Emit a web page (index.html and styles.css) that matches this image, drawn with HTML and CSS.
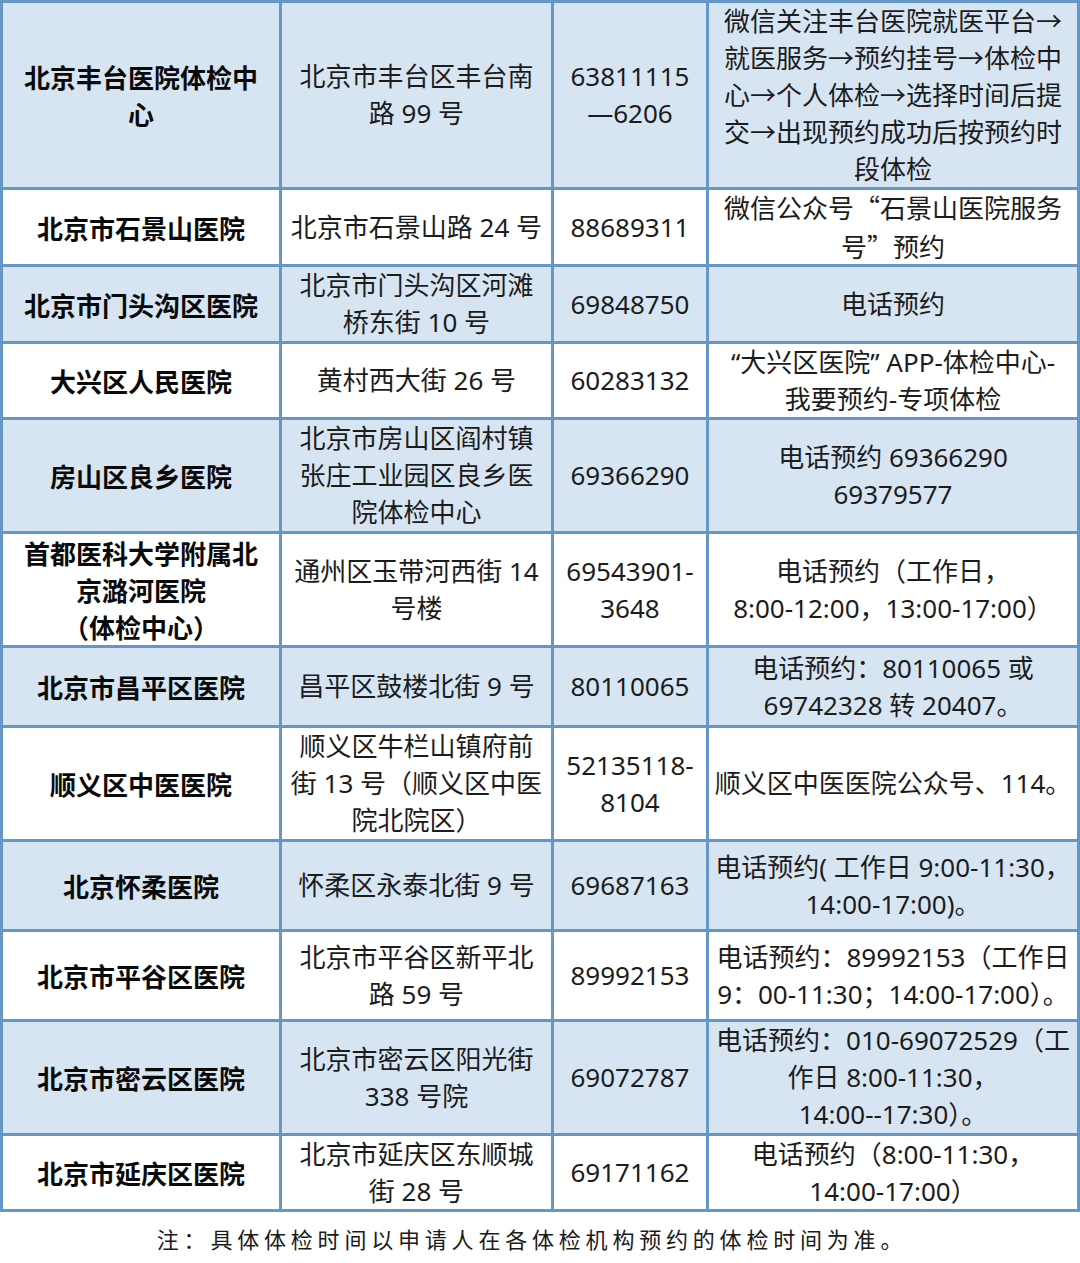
FILE: index.html
```html
<!DOCTYPE html>
<html lang="zh-CN">
<head>
<meta charset="utf-8">
<title>体检机构</title>
<link rel="stylesheet" href="styles.css">
</head>
<body>
<div class="table">
  <div class="row alt">
    <div class="cell name"><div class="t">北京丰台医院体检中<br>心</div></div>
    <div class="cell"><div class="t">北京市丰台区丰台南<br>路 99 号</div></div>
    <div class="cell"><div class="t">63811115<br>—6206</div></div>
    <div class="cell"><div class="t">微信关注丰台医院就医平台→<br>就医服务→预约挂号→体检中<br>心→个人体检→选择时间后提<br>交→出现预约成功后按预约时<br>段体检</div></div>
  </div>
  <div class="row">
    <div class="cell name"><div class="t">北京市石景山医院</div></div>
    <div class="cell"><div class="t">北京市石景山路 24 号</div></div>
    <div class="cell"><div class="t">88689311</div></div>
    <div class="cell"><div class="t">微信公众号<span class="cjk">“</span>石景山医院服务<br>号<span class="cjk">”</span>预约</div></div>
  </div>
  <div class="row alt">
    <div class="cell name"><div class="t">北京市门头沟区医院</div></div>
    <div class="cell"><div class="t">北京市门头沟区河滩<br>桥东街 10 号</div></div>
    <div class="cell"><div class="t">69848750</div></div>
    <div class="cell"><div class="t">电话预约</div></div>
  </div>
  <div class="row">
    <div class="cell name"><div class="t">大兴区人民医院</div></div>
    <div class="cell"><div class="t">黄村西大街 26 号</div></div>
    <div class="cell"><div class="t">60283132</div></div>
    <div class="cell"><div class="t">“大兴区医院” APP-体检中心-<br>我要预约-专项体检</div></div>
  </div>
  <div class="row alt">
    <div class="cell name"><div class="t">房山区良乡医院</div></div>
    <div class="cell"><div class="t">北京市房山区阎村镇<br>张庄工业园区良乡医<br>院体检中心</div></div>
    <div class="cell"><div class="t">69366290</div></div>
    <div class="cell"><div class="t">电话预约 69366290<br>69379577</div></div>
  </div>
  <div class="row">
    <div class="cell name"><div class="t">首都医科大学附属北<br>京潞河医院<br>（体检中心）</div></div>
    <div class="cell"><div class="t">通州区玉带河西街 14<br>号楼</div></div>
    <div class="cell"><div class="t">69543901-<br>3648</div></div>
    <div class="cell"><div class="t">电话预约（工作日，<br>8:00-12:00，13:00-17:00）</div></div>
  </div>
  <div class="row alt">
    <div class="cell name"><div class="t">北京市昌平区医院</div></div>
    <div class="cell"><div class="t">昌平区鼓楼北街 9 号</div></div>
    <div class="cell"><div class="t">80110065</div></div>
    <div class="cell"><div class="t">电话预约：80110065 或<br>69742328 转 20407。</div></div>
  </div>
  <div class="row">
    <div class="cell name"><div class="t">顺义区中医医院</div></div>
    <div class="cell"><div class="t">顺义区牛栏山镇府前<br>街 13 号（顺义区中医<br>院北院区）</div></div>
    <div class="cell"><div class="t">52135118-<br>8104</div></div>
    <div class="cell"><div class="t">顺义区中医医院公众号、114。</div></div>
  </div>
  <div class="row alt">
    <div class="cell name"><div class="t">北京怀柔医院</div></div>
    <div class="cell"><div class="t">怀柔区永泰北街 9 号</div></div>
    <div class="cell"><div class="t">69687163</div></div>
    <div class="cell"><div class="t">电话预约( 工作日 9:00-11:30，<br>14:00-17:00)。</div></div>
  </div>
  <div class="row">
    <div class="cell name"><div class="t">北京市平谷区医院</div></div>
    <div class="cell"><div class="t">北京市平谷区新平北<br>路 59 号</div></div>
    <div class="cell"><div class="t">89992153</div></div>
    <div class="cell"><div class="t">电话预约：89992153（工作日<br>9：00-11:30；14:00-17:00）。</div></div>
  </div>
  <div class="row alt">
    <div class="cell name"><div class="t">北京市密云区医院</div></div>
    <div class="cell"><div class="t">北京市密云区阳光街<br>338 号院</div></div>
    <div class="cell"><div class="t">69072787</div></div>
    <div class="cell"><div class="t">电话预约：010-69072529（工<br>作日 8:00-11:30，<br>14:00--17:30）。</div></div>
  </div>
  <div class="row">
    <div class="cell name"><div class="t">北京市延庆区医院</div></div>
    <div class="cell"><div class="t">北京市延庆区东顺城<br>街 28 号</div></div>
    <div class="cell"><div class="t">69171162</div></div>
    <div class="cell"><div class="t">电话预约（8:00-11:30，<br>14:00-17:00）</div></div>
  </div>
</div>
<p class="note">注：具体体检时间以申请人在各体检机构预约的体检时间为准。</p>
</body>
</html>
```

FILE: styles.css
```css
html, body {
  margin: 0;
  padding: 0;
  background: #ffffff;
}

body {
  width: 1080px;
  font-family: "Noto Sans", "Noto Sans CJK SC", sans-serif;
  color: #1c1c1c;
}

.table {
  display: grid;
  grid-template-columns: 276px 269px 152px 368px;
  grid-template-rows: 184px 74px 74px 73px 111px 111px 77px 111px 87px 87px 111px 73px;
  gap: 3px;
  padding: 3px;
  background: #6596c8;
}

.row {
  display: contents;
}

.cell {
  display: flex;
  align-items: center;
  justify-content: center;
  background: #ffffff;
  font-size: 26px;
  line-height: 37px;
}

.cell .t {
  text-align: center;
  white-space: nowrap;
}

.row.alt .cell {
  background: #d7e5f3;
}

.cell.name {
  font-family: "Noto Sans CJK SC", sans-serif;
  font-weight: 700;
  font-size: 26px;
  color: #0a0a0a;
}

.cjk {
  font-family: "Noto Sans CJK SC", sans-serif;
}

.note {
  margin: 0;
  height: 51px;
  display: flex;
  align-items: center;
  justify-content: center;
  padding-right: 16px;
  font-family: "Noto Sans CJK SC", sans-serif;
  font-weight: 400;
  font-size: 22px;
  letter-spacing: 4.8px;
  color: #1a1a1a;
}
```
